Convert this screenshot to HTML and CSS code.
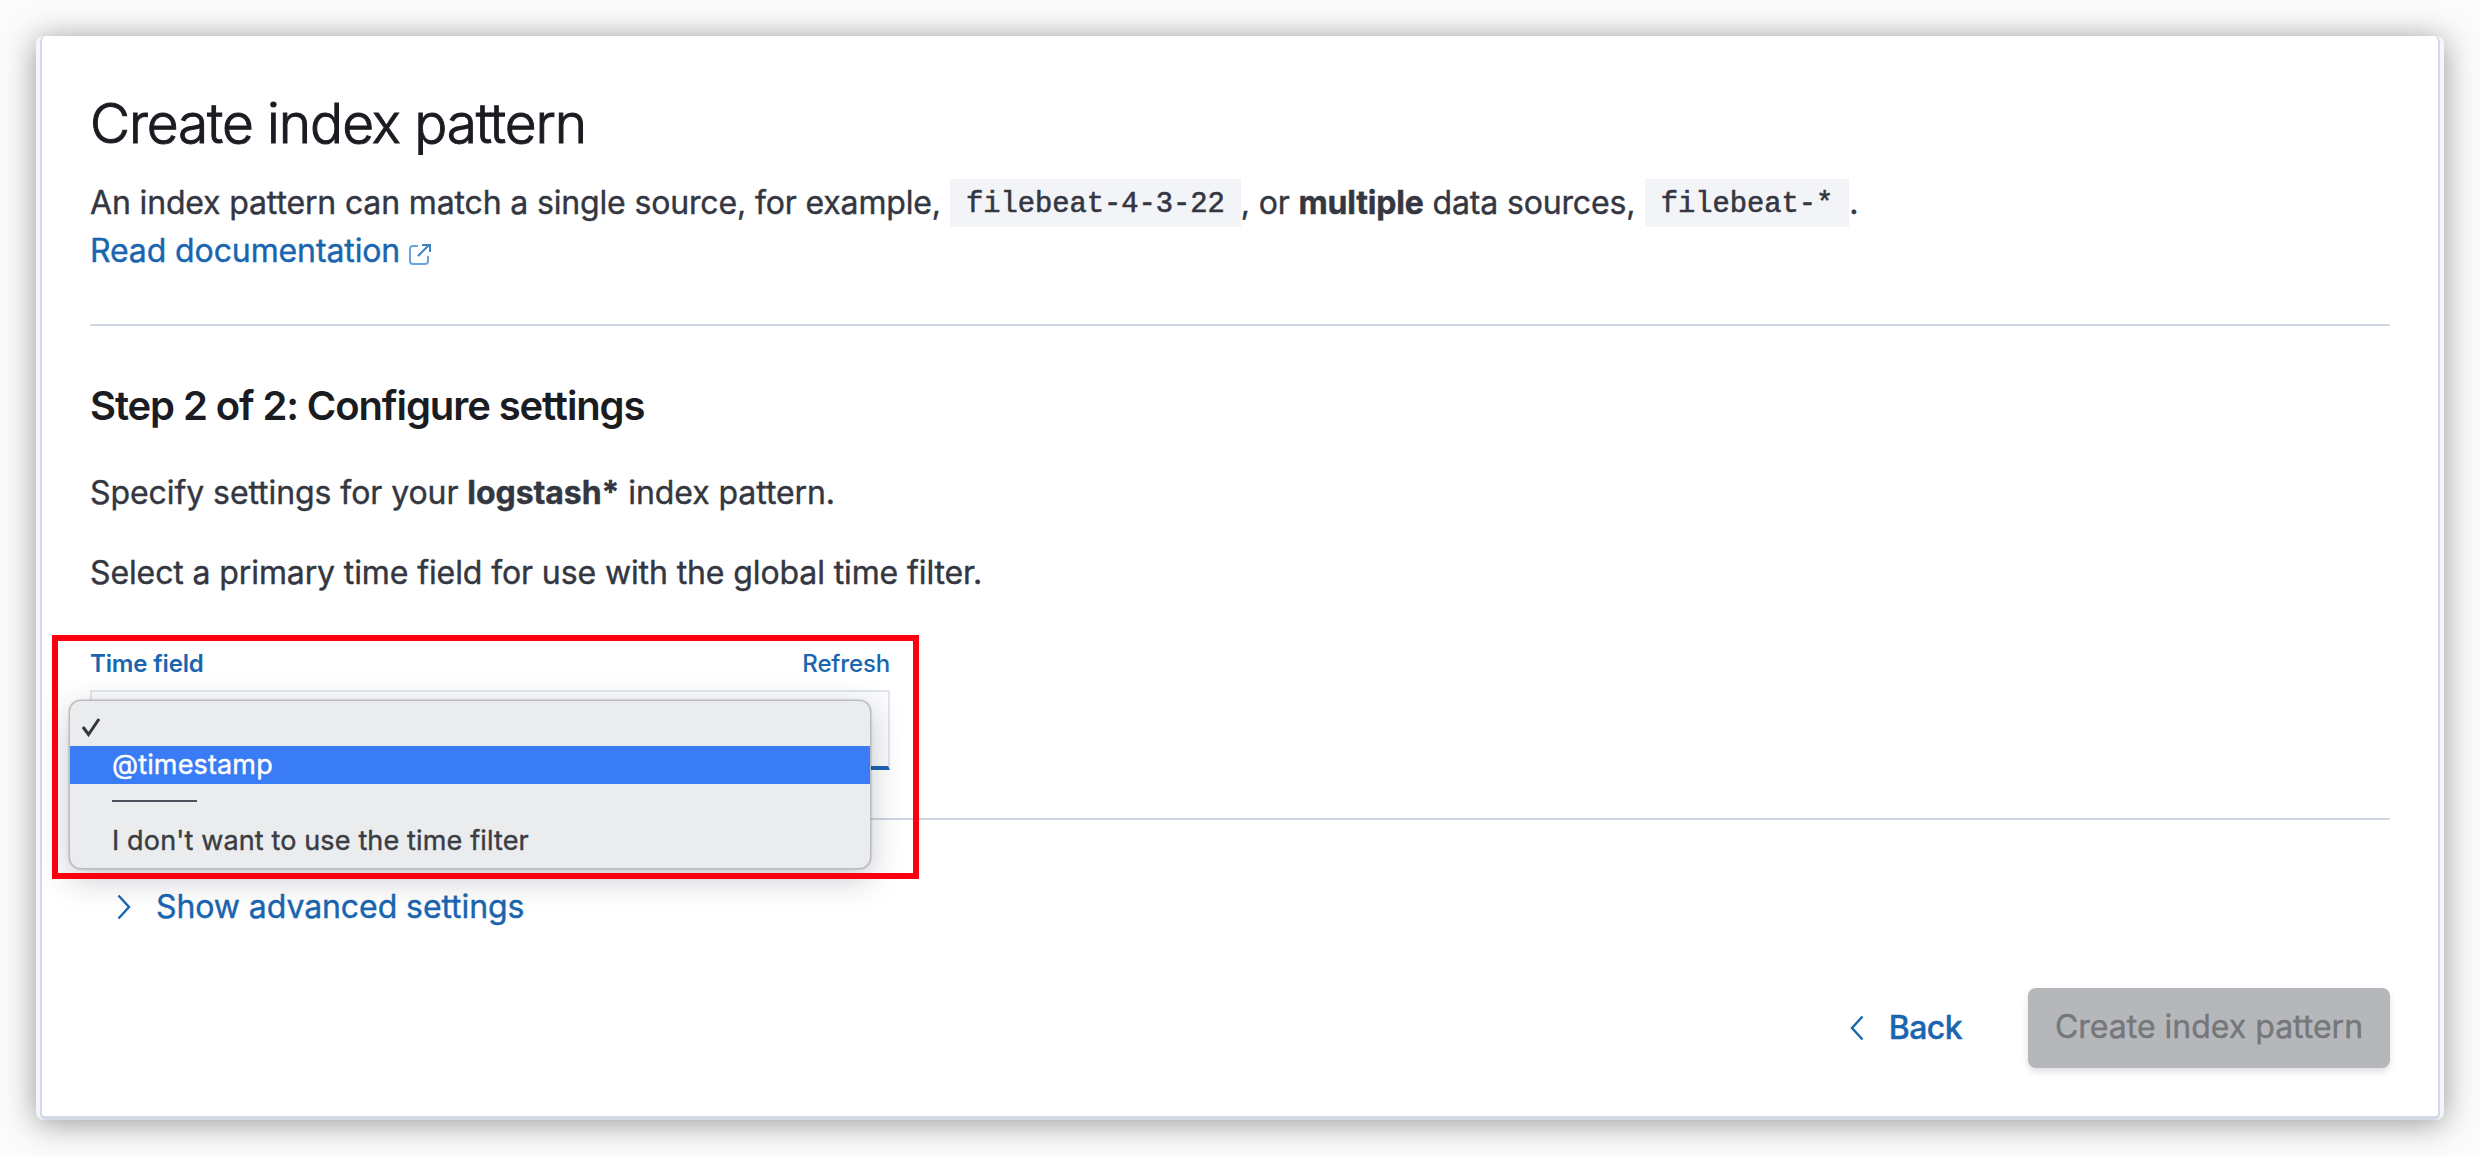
FILE: index.html
```html
<!DOCTYPE html>
<html lang="en">
<head>
<meta charset="utf-8">
<title>Create index pattern</title>
<link rel="stylesheet" href="styles.css">
</head>
<body>
<div class="window">
<main class="panel">
  <h1 class="title">Create index pattern</h1>
  <p class="text intro"><span class="intro-a">An index pattern can match a single source, for example, </span><code class="code">filebeat-4-3-22</code><span class="intro-b">, or <strong>multiple</strong> data sources, </span><code class="code">filebeat-*</code>.</p>
  <a class="text link docs">Read documentation<svg class="external" viewBox="0 0 22 22"><path d="M9 3H4a3 3 0 0 0-3 3v12a3 3 0 0 0 3 3h12a3 3 0 0 0 3-3v-5"/><path class="external-arrow" d="M13 2h8v7M20 2 9 13"/></svg></a>
  <hr class="rule">
  <h2 class="subtitle">Step 2 of 2: Configure settings</h2>
  <p class="text specify">Specify settings for your <strong>logstash*</strong> index pattern.</p>
  <p class="text select-hint">Select a primary time field for use with the global time filter.</p>
  <section class="field">
    <div class="field-head"><label class="label">Time field</label><a class="link refresh">Refresh</a></div>
    <div class="input"></div>
    <div class="menu">
      <div class="option checked"><svg class="check" viewBox="0 0 20 20"><path d="M2 10l5.500 7.500L18 2"/></svg></div>
      <div class="option active">@timestamp</div>
      <div class="option"><span class="dashes"></span></div>
      <div class="option">I don't want to use the time filter</div>
    </div>
    <div class="highlight"></div>
  </section>
  <hr class="rule rule-form">
  <a class="text link advanced"><svg class="chevron" viewBox="0 0 14 26"><path d="M1.500 1.500 12 13 1.500 24.500"/></svg><span>Show advanced settings</span></a>
  <footer class="actions">
    <a class="text link back"><svg class="chevron" viewBox="0 0 14 26"><path d="M12.500 1.500 2 13l10.500 11.500"/></svg><span>Back</span></a>
    <button class="text create" disabled>Create index pattern</button>
  </footer>
</main>
</div>
</body>
</html>
```
FILE: styles.css
```css
* { box-sizing: border-box; }
body {
  margin: 0;
  height: 1156px;
  padding: 36px;
  overflow: hidden;
  background: #fbfbfb;
  color: #343741;
  font-family: Inter, "Liberation Sans", sans-serif;
}
h1, h2, p { margin: 0; }
.window {
  width: 2408px;
  height: 1084px;
  padding: 0 4px;
  border-radius: 8px;
  background: #f5f6fa;
  box-shadow: 0 3px 32px rgba(0, 0, 0, .4);
}
.panel {
  display: flex;
  flex-direction: column;
  height: 1084px;
  padding: 54px 48px 0;
  border: solid #d3dae6;
  border-width: 0 2px 4px;
  border-radius: 6px;
  background: #fff;
}
.title {
  height: 64px;
  font-size: 55px;
  line-height: 67px;
  font-weight: 300;
  letter-spacing: -1.100px;
  color: #1a1c21;
  -webkit-text-stroke: 1px;
}
.text { font-size: 32px; line-height: 48px; letter-spacing: -.11px; white-space: pre; -webkit-text-stroke: .4px; }
.intro { display: flex; align-items: center; margin-top: 25px; }
.intro-a { width: 860px; letter-spacing: -.15px; }
.intro-b { width: 404px; letter-spacing: -.16px; }
.code {
  height: 48px;
  padding: 0 16px;
  background: #f3f4f8;
  font-family: "Liberation Mono", monospace;
  font-size: 28.800px;
  line-height: 52px;
  letter-spacing: -.03px;
  -webkit-text-stroke: .6px;
}
.link { color: #1a65b0; }
.docs { display: flex; align-items: center; gap: 9px; }
.external { width: 22px; height: 22px; margin-top: 5px; fill: none; stroke: #6ba3dc; stroke-width: 2; }
.external-arrow { stroke: #3c80c6; }
.rule { width: 100%; height: 2px; margin: 49px 0 0; border: 0; background: #d1d6e5; flex: none; }
.rule-form { margin-top: 48px; }
.subtitle { margin-top: 54px; font-size: 40px; line-height: 52px; font-weight: 600; letter-spacing: -1.100px; color: #1a1c21; }
.specify { margin-top: 37px; letter-spacing: -.07px; }
.select-hint { margin-top: 32px; }
.field { position: relative; width: 800px; height: 122px; margin-top: 51px; }
.field-head { display: flex; justify-content: space-between; height: 42px; font-size: 24px; line-height: 32px; letter-spacing: -.15px; }
.label { color: #1a65b0; font-weight: 600; }
.refresh { font-weight: 500; }
.input { height: 80px; border: 2px solid #e3e5ec; border-bottom: 4px solid #1a65b0; background: #fbfcfd; }
.menu {
  position: absolute;
  left: -21px;
  top: 52px;
  width: 802px;
  height: 169px;
  padding-top: 7px;
  border: 1px solid #bbbcbf;
  border-radius: 12px;
  background: #ebecee;
  box-shadow: 0 10px 32px rgba(30, 40, 60, .25), 0 0 2px rgba(0, 0, 0, .4);
}
.option { display: flex; align-items: center; height: 38px; padding-left: 42px; font-size: 27px; line-height: 38px; letter-spacing: .14px; color: #3a3c43; -webkit-text-stroke: .4px; }
.checked { padding-left: 11px; }
.check { width: 20px; height: 20px; fill: none; stroke: #34363b; stroke-width: 3; }
.active { background: #397cf6; color: #fff; }
.dashes { width: 85px; height: 2px; margin-top: -4px; background: #50525b; }
.highlight { position: absolute; left: -38px; top: -13px; width: 867px; height: 244px; border: 6px solid #fd0010; }
.advanced { display: flex; align-items: center; margin: 63px 0 0 27px; }
.chevron { width: 14px; height: 26px; fill: none; stroke: currentColor; stroke-width: 2.400; }
.advanced span { margin-left: 25px; letter-spacing: -.08px; }
.actions { display: flex; justify-content: flex-end; align-items: center; gap: 66px; margin-top: 57px; height: 80px; }
.back { display: flex; align-items: center; font-weight: 500; letter-spacing: -.6px; }
.back span { margin-left: 25px; }
.create {
  width: 362px;
  height: 80px;
  padding: 0 0 2px;
  border: 0;
  border-radius: 8px;
  background: #b5b7bb;
  color: #75777b;
  font-family: inherit;
  letter-spacing: 0;
  box-shadow: 0 4px 6px rgba(100, 105, 120, .2);
}
```
